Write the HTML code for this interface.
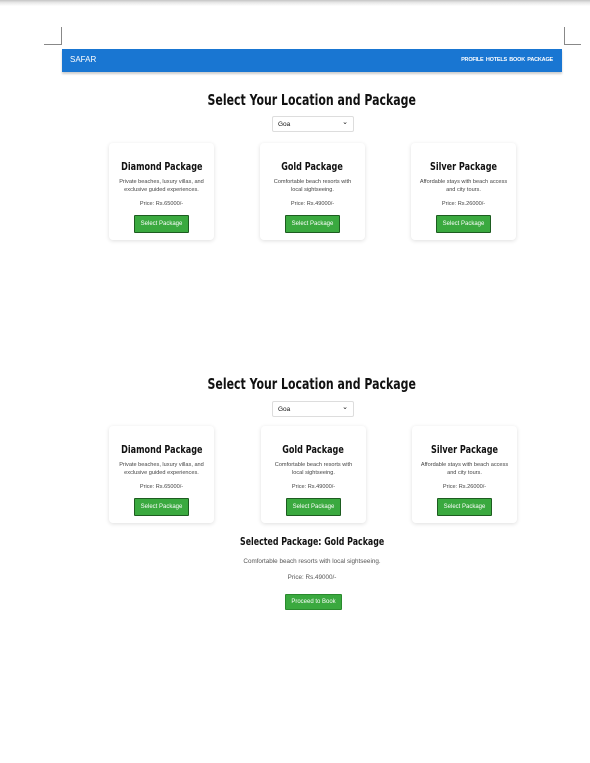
<!DOCTYPE html>
<html><head><meta charset="utf-8"><style>
*{margin:0;padding:0;box-sizing:border-box}
body{width:590px;height:763px;background:#fff;position:relative;overflow:hidden;font-family:"Liberation Sans",sans-serif;color:#111}
.a{position:absolute}
.top{left:0;top:0;width:590px;height:6px;background:linear-gradient(#c4c4c4,#e6e6e6 40%,#fff)}
.nav{left:62px;top:49px;width:500px;height:23px;background:#1976d2;box-shadow:0 2px 2px rgba(0,0,0,.2);color:#fff}
.nav .l{position:absolute;left:8px;top:6px;font-size:8px}
.nav .r{position:absolute;right:9px;top:8px;font-size:5.5px;word-spacing:1px;font-weight:bold;letter-spacing:-0.2px}
.t{width:500px;left:62px;text-align:center}
.t span,.sh span,.card h3 span{display:inline-block;white-space:nowrap;font-weight:bold;font-family:"DejaVu Sans",sans-serif}
.t span{font-size:15px;transform:scaleX(0.73)}
.sel{width:82px;height:16px;border:1px solid #ddd;border-radius:2px;font-size:6.5px;padding:4px 5px;background:#fff}
.sel:after{content:"⌄";position:absolute;right:5px;top:1px;font-size:7px}
.card{width:105px;height:97px;background:#fff;border-radius:4px;box-shadow:0 1px 4px rgba(0,0,0,.13);text-align:center}
.card h3{font-size:10.5px;margin-top:18px}
.card h3 span{font-size:10.5px;transform:scaleX(0.77)}
.card p{font-size:5.6px;color:#444;line-height:8px;margin:5px 8px 0}
.card .p{margin-top:6px}
.btn{display:inline-block;background:#3aa93f;color:#fff;font-size:6px;border:1.2px solid #1d5c20;padding:5px 6px;margin-top:7px;border-radius:1px}
.c{width:500px;left:62px;text-align:center}
.sh span{font-size:10.5px;transform:scaleX(0.75)}
</style></head><body>
<div class="a top"></div>
<div class="a" style="left:61px;top:27px;width:1px;height:18px;background:#888"></div>
<div class="a" style="left:44px;top:44px;width:18px;height:1px;background:#888"></div>
<div class="a" style="left:564px;top:27px;width:1px;height:18px;background:#888"></div>
<div class="a" style="left:564px;top:44px;width:17px;height:1px;background:#888"></div>
<div class="a nav"><span class="l">SAFAR</span><span class="r">PROFILE HOTELS BOOK PACKAGE</span></div>

<div class="a t" style="top:91px"><span>Select Your Location and Package</span></div>
<div class="a sel" style="left:272px;top:116px">Goa</div>
<div class="a card" style="left:109px;top:143px"><h3><span>Diamond Package</span></h3><p>Private beaches, luxury villas, and exclusive guided experiences.</p><p class="p">Price: Rs.65000/-</p><span class="btn">Select Package</span></div>
<div class="a card" style="left:260px;top:143px"><h3><span>Gold Package</span></h3><p>Comfortable beach resorts with local sightseeing.</p><p class="p">Price: Rs.49000/-</p><span class="btn">Select Package</span></div>
<div class="a card" style="left:411px;top:143px"><h3><span>Silver Package</span></h3><p>Affordable stays with beach access and city tours.</p><p class="p">Price: Rs.26000/-</p><span class="btn">Select Package</span></div>

<div class="a t" style="top:375px"><span>Select Your Location and Package</span></div>
<div class="a sel" style="left:272px;top:401px">Goa</div>
<div class="a card" style="left:109px;top:426px"><h3><span>Diamond Package</span></h3><p>Private beaches, luxury villas, and exclusive guided experiences.</p><p class="p">Price: Rs.65000/-</p><span class="btn">Select Package</span></div>
<div class="a card" style="left:261px;top:426px"><h3><span>Gold Package</span></h3><p>Comfortable beach resorts with local sightseeing.</p><p class="p">Price: Rs.49000/-</p><span class="btn">Select Package</span></div>
<div class="a card" style="left:412px;top:426px"><h3><span>Silver Package</span></h3><p>Affordable stays with beach access and city tours.</p><p class="p">Price: Rs.26000/-</p><span class="btn">Select Package</span></div>

<div class="a c sh" style="top:532px"><span>Selected Package: Gold Package</span></div>
<div class="a c" style="top:558px;font-size:6.3px;color:#555">Comfortable beach resorts with local sightseeing.</div>
<div class="a c" style="top:574px;font-size:6.3px;color:#555">Price: Rs.49000/-</div>
<div class="a" style="left:285px;top:594px;width:57px;height:16px;background:#3aa93f;border:1px solid #2a8a2e;border-radius:1px;color:#fff;font-size:6px;text-align:center;line-height:14px">Proceed to Book</div>
</body></html>
